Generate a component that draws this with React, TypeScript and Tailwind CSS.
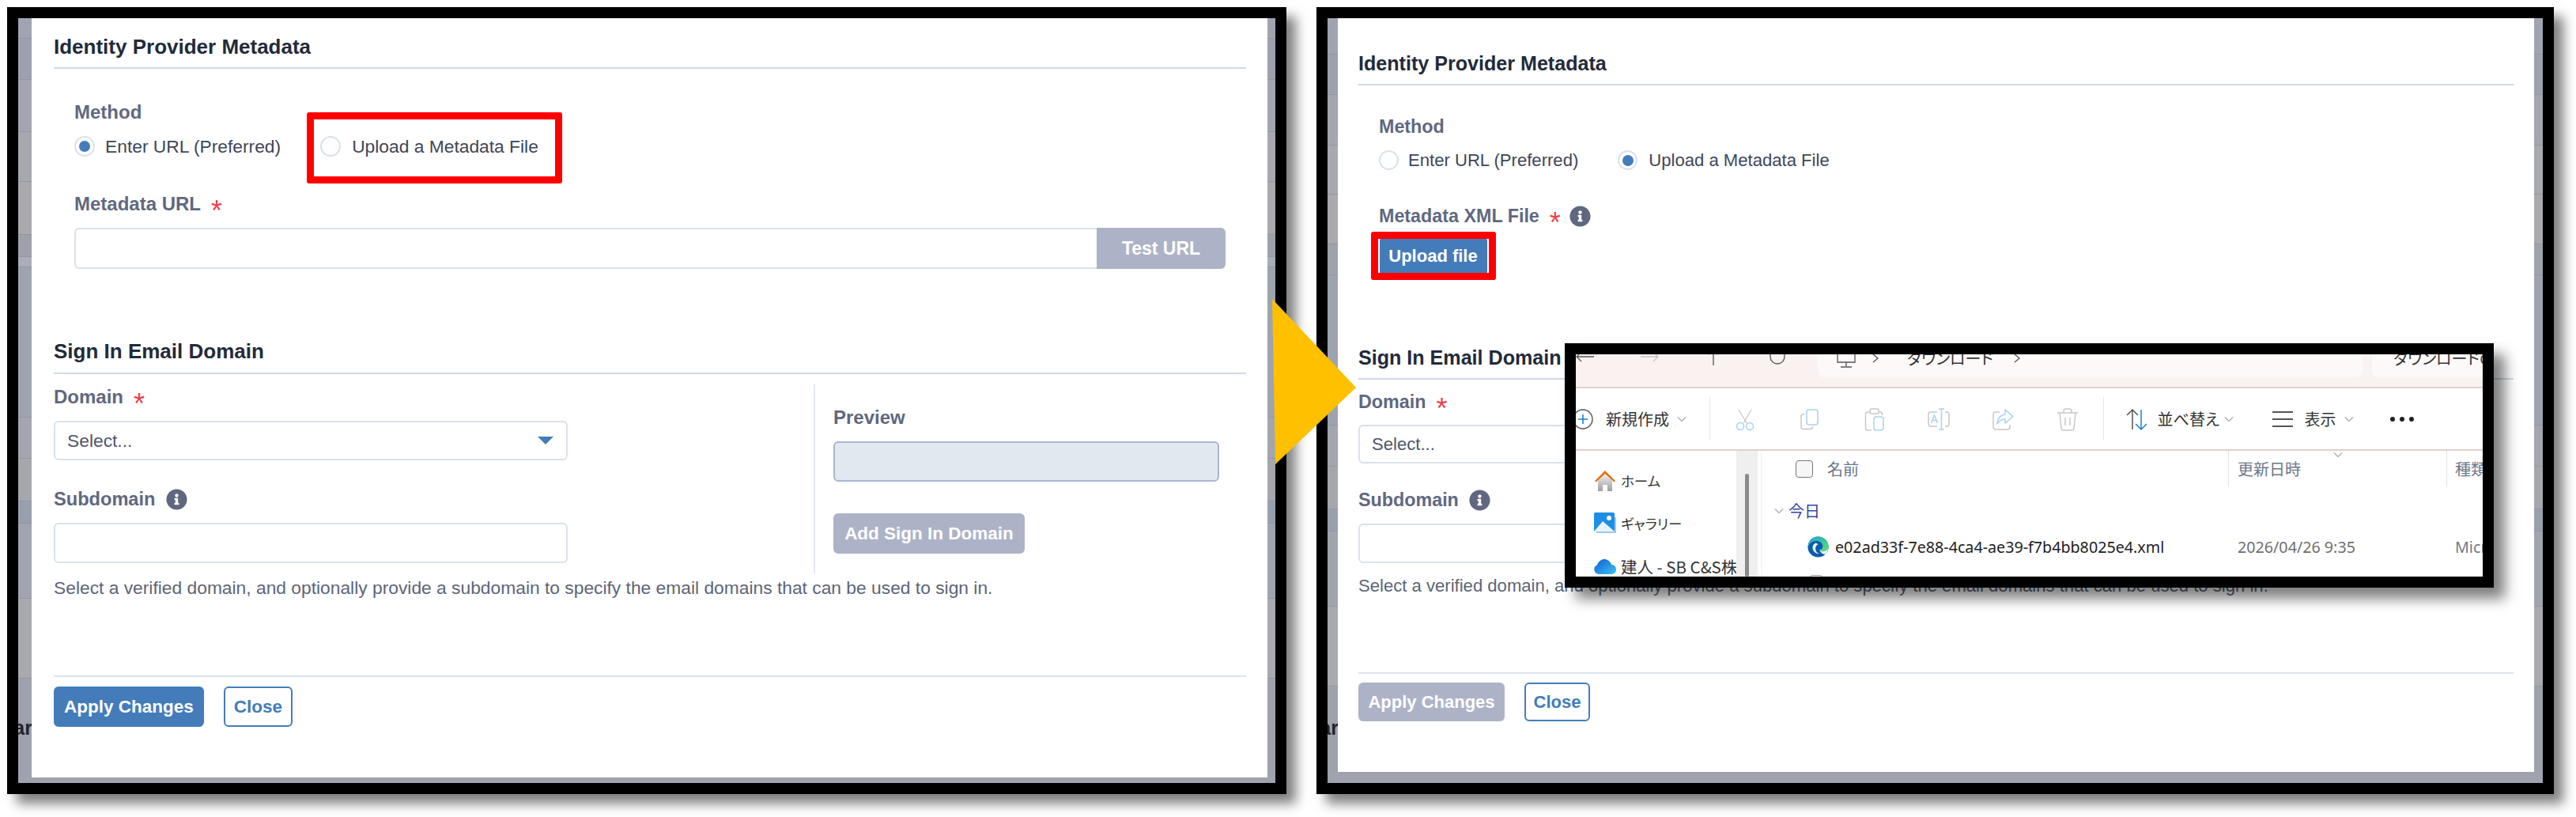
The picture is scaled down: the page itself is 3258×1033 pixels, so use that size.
import { FaInfoCircle } from 'react-icons/fa'

const sans = "font-['Liberation_Sans',Arial,sans-serif]"
const jp = "font-['Noto_Sans_CJK_JP','Noto_Sans',sans-serif]"

// slivers of the page behind the dialog: height and colour of each band
const bandsLeft = [
  [26, '#a0a4b2'], [52, '#9da1af'], [66, '#a3a6b0'], [63, '#a8a9b0'], [67, '#a9a9ae'],
  [28, '#9ea1aa'], [13, '#a9aeb8'], [190, '#9ea3b0'], [52, '#a3a6ae'], [54, '#a6a7ad'],
  [28, '#98a0ae'], [95, '#a0a4ae'], [101, '#a9a9b0'], [132, '#9ea2ac'],
] as const
const bandsRight = [
  [46, '#a0a4b2'], [51, '#9da1af'], [64, '#a3a6b0'], [62, '#a8a9b0'], [63, '#a9a9ae'],
  [39, '#9ea3ae'], [190, '#9ea3b0'], [52, '#a3a6ae'], [54, '#a6a7ad'], [28, '#98a0ae'],
  [95, '#a0a4ae'], [101, '#a9a9b0'], [121, '#9ea2ac'],
] as const

function Strip({ bands, width, fragment }: { bands: readonly (readonly [number, string])[]; width: string; fragment?: string }) {
  return (
    <div className={`relative flex shrink-0 flex-col overflow-hidden ${width}`}>
      {bands.map(([h, c], i) => (
        <div key={i} className="shrink-0 border-b border-[#92969f]" style={{ height: h, backgroundColor: c }} />
      ))}
      {fragment && <span className={`absolute right-[-1px] top-[882px] text-[25px] font-bold leading-[30px] text-[#20242e] ${sans}`}>{fragment}</span>}
    </div>
  )
}

function Radio({ on, size }: { on?: boolean; size: string }) {
  return (
    <span className={`flex shrink-0 items-center justify-center rounded-full border-2 border-[#d9e1ec] bg-white ${size}`}>
      {on && <span className="h-[14px] w-[14px] rounded-full bg-[#447cba]" />}
    </span>
  )
}

function Star() {
  return <span className="ml-[13px] mt-[18px] text-[36px] font-normal leading-[30px] text-[#ee3f4e]">*</span>
}

function CutIcon() {
  return (
    <svg viewBox="0 0 30 30" className="h-[30px] w-[30px]" fill="none">
      <path d="M7 3l10 17M23 3L13 20" stroke="#c8c8c8" strokeWidth="1.3" />
      <circle cx="9" cy="24" r="4.5" stroke="#a6d2f2" strokeWidth="1.5" />
      <circle cx="21" cy="24" r="4.5" stroke="#a6d2f2" strokeWidth="1.5" />
    </svg>
  )
}
function CopyIcon() {
  return (
    <svg viewBox="0 0 30 30" className="h-[30px] w-[30px]" fill="none">
      <path d="M8 9H6.500A2.500 2.500 0 0 0 4 11.500V25a2.500 2.500 0 0 0 2.500 2.500H16A2.500 2.500 0 0 0 18.500 25v-1" stroke="#c8c8c8" strokeWidth="1.5" />
      <rect x="11" y="3" width="14" height="19" rx="3" stroke="#a6d2f2" strokeWidth="1.5" />
    </svg>
  )
}
function PasteIcon() {
  return (
    <svg viewBox="0 0 30 30" className="h-[30px] w-[30px]" fill="none">
      <path d="M10 6H7a2.500 2.500 0 0 0-2.500 2.500v18A2.500 2.500 0 0 0 7 29h5M21 6h2a2.500 2.500 0 0 1 2.500 2.500V10" stroke="#c8c8c8" strokeWidth="1.5" />
      <rect x="10" y="2" width="11" height="6" rx="2" stroke="#c8c8c8" strokeWidth="1.5" />
      <rect x="15" y="12" width="12" height="17" rx="3" stroke="#a6d2f2" strokeWidth="1.5" />
    </svg>
  )
}
function RenameIcon() {
  return (
    <svg viewBox="0 0 30 30" className="h-[30px] w-[30px]" fill="none">
      <path d="M13 6H5a3 3 0 0 0-3 3v12a3 3 0 0 0 3 3h8M23 6h2a3 3 0 0 1 3 3v12a3 3 0 0 1-3 3h-2" stroke="#c8c8c8" strokeWidth="1.5" />
      <path d="M15 2h7M15 28h7M18.500 2v26M5.500 20l4-10 4 10M7 16.500h5" stroke="#a6d2f2" strokeWidth="1.5" />
    </svg>
  )
}
function ShareIcon() {
  return (
    <svg viewBox="0 0 30 30" className="h-[30px] w-[30px]" fill="none">
      <path d="M11 6H6a3 3 0 0 0-3 3v16a3 3 0 0 0 3 3h15a3 3 0 0 0 3-3v-3" stroke="#c8c8c8" strokeWidth="1.5" />
      <path d="M18 3l10 8.500-10 8.500v-5c-5 0-8 2-10 6 0-7 4-11 10-12z" stroke="#a6d2f2" strokeWidth="1.5" strokeLinejoin="round" />
    </svg>
  )
}
function TrashIcon() {
  return (
    <svg viewBox="0 0 30 30" className="h-[30px] w-[30px]" fill="none" stroke="#c8c8c8" strokeWidth="1.5">
      <path d="M2 7h26M10 7V4.500A2.500 2.500 0 0 1 12.500 2h5A2.500 2.500 0 0 1 20 4.500V7M5 7l2 20a2.500 2.500 0 0 0 2.500 2h11a2.500 2.500 0 0 0 2.500-2l2-20M12 13v10M18 13v10" />
    </svg>
  )
}
function Chevron({ className }: { className?: string }) {
  return (
    <svg viewBox="0 0 12 8" className={`h-[8px] w-[12px] shrink-0 ${className ?? ''}`} fill="none" stroke="#666" strokeWidth="1">
      <path d="M1 1.500l5 5 5-5" />
    </svg>
  )
}
function HomeIcon() {
  return (
    <svg viewBox="0 0 28 28" className="h-[28px] w-[28px] shrink-0">
      <defs>
        <linearGradient id="wall" x1="0" y1="0" x2="0" y2="1">
          <stop offset="0" stopColor="#f2f2f2" />
          <stop offset="1" stopColor="#9c9c9c" />
        </linearGradient>
      </defs>
      <path d="M5 13L14 5l9 8v14h-6v-8h-6v8H5z" fill="url(#wall)" />
      <path d="M14 1L1 14l1.500 1.500L14 5l11.500 10.500L27 14z" fill="#e3700f" />
    </svg>
  )
}
function GalleryIcon() {
  return (
    <svg viewBox="0 0 28 28" className="h-[28px] w-[28px] shrink-0">
      <path d="M3 3v23h25V6" fill="#9cc9ee" />
      <rect x="0" y="0" width="26" height="24" rx="1.500" fill="#1d8fe6" />
      <path d="M0 24l11-13 15 13z" fill="#e8f3fc" />
      <circle cx="19" cy="7" r="3" fill="#fff" />
    </svg>
  )
}
function CloudIcon() {
  return (
    <svg viewBox="0 0 28 20" className="h-[20px] w-[28px] shrink-0">
      <defs>
        <linearGradient id="cl" x1="0" y1="0" x2="1" y2="1">
          <stop offset="0" stopColor="#0c5fd0" />
          <stop offset="1" stopColor="#3fc0f5" />
        </linearGradient>
      </defs>
      <path d="M6 20a6 6 0 0 1-2-11.500C6 3 10 1 13 1c4 0 8 3 9 7 3.500 0 6 2.500 6 6s-2.500 6-6 6z" fill="url(#cl)" />
    </svg>
  )
}
function EdgeIcon() {
  return (
    <svg viewBox="0 0 32 32" className="h-[27px] w-[27px] shrink-0">
      <defs>
        <linearGradient id="eg" x1="0" y1="0" x2="1" y2="1">
          <stop offset="0" stopColor="#1fa2d8" />
          <stop offset="1" stopColor="#5ee06e" />
        </linearGradient>
      </defs>
      <circle cx="16" cy="16" r="15.500" fill="#0b5cab" />
      <path d="M16 .5A15.500 15.500 0 0 1 31.500 17c0 3.500-3 5.500-7 5.500-3 0-6-1-6.500-2.500 3 0 5-2 5-5 0-5-5-8-10-8-6 0-10 4-12.500 9C1 8 7.500.5 16 .5z" fill="url(#eg)" />
      <path d="M18 20c2 2.500 5 3 7 2.500 2.500-.5 5-2 6-3.500-.5 3-2 6-4 8-3 0-7-1-9-7z" fill="#f2fbff" />
      <path d="M13 10c-4 1-6 5-5 9 1 5 6 8 11 7-4 0-7-3-7-7 0-3 1-6 4-7z" fill="#e8f6fc" />
    </svg>
  )
}

function FileExplorer() {
  return (
    <div className="absolute left-[314px] top-[425px] z-10 h-[309px] w-[1175px] border-[14px] border-black bg-white shadow-[14px_14px_16px_rgba(0,0,0,0.5)]">
      <div className={`flex h-full flex-col overflow-hidden text-[#333] [font-feature-settings:'palt'] ${jp}`}>
        {/* address bar, cut off at the top */}
        <div className="flex h-[43px] shrink-0 items-start overflow-hidden border-b-2 border-[#e2cfcf] bg-[#f9f2f1]">
          <div className="flex shrink-0 gap-[57px] text-[#555]">
            <svg viewBox="0 0 24 12" className="h-[12px] w-[24px]" fill="none" stroke="#555" strokeWidth="1.300"><path d="M1 3h22M7 -3L1 3l6 6" /></svg>
            <svg viewBox="0 0 24 12" className="h-[12px] w-[24px]" fill="none" stroke="#c4c4c4" strokeWidth="1.300"><path d="M1 3h22M17 -3l6 6-6 6" /></svg>
            <svg viewBox="0 0 24 14" className="h-[14px] w-[24px]" fill="none" stroke="#555" strokeWidth="1.300"><path d="M12 0v14M6 0l6-3 6 3" /></svg>
            <svg viewBox="0 0 24 14" className="h-[14px] w-[24px]" fill="none" stroke="#555" strokeWidth="1.300"><path d="M3 0v3a9 9 0 0 0 18 0V0" /></svg>
          </div>
          <div className="ml-[39px] flex h-[29px] w-[689px] shrink-0 items-start rounded-b-lg bg-[#fdf9f9] pl-[23px]">
            <svg viewBox="0 0 26 18" className="h-[18px] w-[26px] shrink-0" fill="none" stroke="#555" strokeWidth="1.300"><path d="M2 -4h22v14H2zM13 10v5M6 16h14" /></svg>
            <svg viewBox="0 0 10 14" className="ml-[19px] h-[14px] w-[10px] shrink-0" fill="none" stroke="#555" strokeWidth="1.300"><path d="M2 0l6 5-6 5" /></svg>
            <span className="ml-[35px] mt-[-9px] h-[28px] w-[100px] shrink-0 whitespace-nowrap text-[20px] leading-[28px]">ダウンロード</span>
            <svg viewBox="0 0 10 14" className="ml-[34px] h-[14px] w-[10px] shrink-0" fill="none" stroke="#555" strokeWidth="1.300"><path d="M2 0l6 5-6 5" /></svg>
          </div>
          <div className="ml-[12px] h-[29px] flex-1 overflow-hidden rounded-bl-lg bg-[#fdf9f9] pl-[27px]">
            <span className="mt-[-9px] block h-[28px] whitespace-nowrap text-[20px] leading-[28px]">ダウンロードの検索</span>
          </div>
        </div>

        {/* command bar */}
        <div className="flex h-[79px] shrink-0 items-center overflow-hidden border-b-2 border-[#e2cfcf] bg-white">
          <svg viewBox="0 0 26 26" className="-ml-[4px] h-[26px] w-[26px] shrink-0" fill="none">
            <circle cx="13" cy="13" r="12" stroke="#555" strokeWidth="1.400" />
            <path d="M13 7v12M7 13h12" stroke="#1a7fd6" strokeWidth="1.600" />
          </svg>
          <span className="ml-[16px] w-[80px] shrink-0 whitespace-nowrap text-[20px] leading-[26px]">新規作成</span>
          <Chevron className="ml-[10px]" />
          <div className="ml-[29px] h-[55px] w-px shrink-0 bg-[#e8e8e8]" />
          <div className="ml-[29px] flex shrink-0 gap-[51.500px]">
            <CutIcon />
            <CopyIcon />
            <PasteIcon />
            <RenameIcon />
            <ShareIcon />
            <TrashIcon />
          </div>
          <div className="ml-[30px] h-[55px] w-px shrink-0 bg-[#e8e8e8]" />
          <svg viewBox="0 0 30 30" className="ml-[26px] h-[30px] w-[30px] shrink-0" fill="none" strokeWidth="1.500">
            <path d="M10 28V3M3 10l7-7 7 7" stroke="#555" />
            <path d="M21 3v25M14 21l7 7 7-7" stroke="#1a7fd6" />
          </svg>
          <span className="ml-[12px] w-[74px] shrink-0 whitespace-nowrap text-[20px] leading-[26px]">並べ替え</span>
          <Chevron className="ml-[10px]" />
          <svg viewBox="0 0 30 24" className="ml-[47px] h-[24px] w-[30px] shrink-0" fill="none" stroke="#555" strokeWidth="1.800">
            <path d="M2 3h26M2 12h26M2 21h26" />
          </svg>
          <span className="ml-[13px] w-[40px] shrink-0 whitespace-nowrap text-[20px] leading-[26px]">表示</span>
          <Chevron className="ml-[10px]" />
          <div className="ml-[46px] flex shrink-0 gap-[6px]">
            <span className="h-[6px] w-[6px] rounded-full bg-[#222]" />
            <span className="h-[6px] w-[6px] rounded-full bg-[#222]" />
            <span className="h-[6px] w-[6px] rounded-full bg-[#222]" />
          </div>
        </div>

        <div className="flex min-h-0 flex-1 overflow-hidden">
          {/* navigation pane */}
          <div className="w-[203px] shrink-0 overflow-hidden pl-[23px] pt-[11px]">
            <div className="flex h-[54px] items-center gap-[6px] whitespace-nowrap text-[17.500px]"><HomeIcon />ホーム</div>
            <div className="flex h-[54px] items-center gap-[6px] whitespace-nowrap text-[17.500px]"><GalleryIcon />ギャラリー</div>
            <div className="flex h-[54px] items-center gap-[6px] whitespace-nowrap text-[20.500px]"><CloudIcon />建人 - SB C&amp;S株式会社</div>
          </div>
          <div className="flex w-[27px] shrink-0 justify-center bg-[#efefef] pt-[29px]">
            <div className="h-full w-[5px] rounded-full bg-[#8a8a8a]" />
          </div>
          <div className="ml-[4px] min-w-0 flex-1 overflow-hidden border-l border-[#f0f0f0]">
            <div className="relative grid h-[46px] grid-cols-[590px_276px_1fr] items-center text-[20px] text-[#6b7888]">
              <div className="flex items-center pl-[43px]">
                <span className="h-[22px] w-[22px] rounded-[4px] border border-[#777] bg-[#f6f6f6]" />
                <span className="ml-[18px]">名前</span>
              </div>
              <div className="flex h-full items-center border-l border-[#e2e2e2] pl-[11px] leading-[26px]">更新日時</div>
              <div className="flex h-full items-center overflow-hidden whitespace-nowrap border-l border-[#e2e2e2] pl-[10px]">種類</div>
              <Chevron className="absolute left-[723px] top-[1px]" />
            </div>
            <div className="mt-[12px] flex h-[36px] items-center pl-[16px]">
              <Chevron />
              <span className="ml-[6px] text-[20px] text-[#34499c]">今日</span>
            </div>
            <div className="mt-[10px] grid h-[36px] grid-cols-[590px_276px_1fr] items-center whitespace-nowrap font-['Noto_Sans',sans-serif] text-[19.700px]">
              <div className="flex items-center pl-[58px] text-[#222]">
                <EdgeIcon />
                <span className="ml-[8px]">e02ad33f-7e88-4ca4-ae39-f7b4bb8025e4.xml</span>
              </div>
              <div className="pl-[12px] text-[#6f6f6f]">2026/04/26 9:35</div>
              <div className="overflow-hidden pl-[11px] text-[#6f7a88]">Microsoft Edge</div>
            </div>
            <div className="ml-[61px] mt-[17px] h-[16px] w-[16px] rounded-t-[3px] border border-[#999]" />
          </div>
        </div>
      </div>
    </div>
  )
}

export default function App() {
  return (
    <div className={`relative flex h-[1033px] w-[3258px] gap-[38px] overflow-hidden bg-white pl-[9px] pt-[9px] ${sans}`}>
      {/* Before: enter URL selected */}
      <div className="flex h-[995px] w-[1618px] shrink-0 flex-col overflow-hidden border-[14px] border-black shadow-[12px_12px_14px_rgba(0,0,0,0.5)]">
        <div className="flex min-h-0 flex-1">
          <Strip bands={bandsLeft} width="w-[17px]" fragment="ar" />
          <div className="flex h-[960px] flex-1 flex-col rounded-br-[6px] bg-white px-[28px] pr-[27px]">
            <div className="flex h-[64px] shrink-0 items-center border-b-2 border-[#cfd9e7] pt-[11px] text-[26px] font-bold text-[#222a3a]">Identity Provider Metadata</div>
            <div className="pl-[26px] pr-[26px]">
              <div className="mt-[40px] text-[24px] font-bold leading-[30px] text-[#5f6880]">Method</div>
              <div className="mt-[15px] flex h-[26px] items-center text-[22.800px] text-[#3f4658]">
                <Radio on size="h-[26px] w-[26px]" />
                <span className="ml-[13px] whitespace-nowrap">Enter URL (Preferred)</span>
                <span className="relative ml-[50px] flex items-center">
                  <Radio size="h-[26px] w-[26px]" />
                  <span className="ml-[14px] whitespace-nowrap">Upload a Metadata File</span>
                  <span className="absolute -bottom-[30px] -left-[17px] -right-[30px] -top-[26px] rounded-[3px] border-[9px] border-[#ff0000]" />
                </span>
              </div>
              <div className="mt-[45px] flex h-[30px] items-center text-[24px] font-bold leading-[30px] text-[#5f6880]">Metadata URL<Star /></div>
              <div className="mt-[15px] flex h-[52px]">
                <div className="flex-1 rounded-l-[6px] border-2 border-r-0 border-[#d9e1ec] bg-white" />
                <div className="flex w-[163px] items-center justify-center rounded-r-[6px] bg-[#adb3c7] text-[23px] font-bold text-white">Test URL</div>
              </div>
            </div>
            <div className="mt-[69px] flex h-[64px] shrink-0 items-center border-b-2 border-[#cfd9e7] pt-[9px] text-[26px] font-bold text-[#222a3a]">Sign In Email Domain</div>
            <div className="mt-[13px] flex h-[239px]">
              <div className="w-[961px] shrink-0 pt-[1px]">
                <div className="flex h-[30px] items-center text-[24px] font-bold leading-[30px] text-[#5f6880]">Domain<Star /></div>
                <div className="mt-[15px] flex h-[50px] w-[650px] items-center justify-between rounded-[6px] border-2 border-[#d9e1ec] pl-[15px] pr-[16px] text-[22.800px] text-[#4f566a]">
                  Select...
                  <svg viewBox="0 0 20 10" className="h-[10px] w-[20px]"><path d="M0 0h20L10 10z" fill="#447cba" /></svg>
                </div>
                <div className="mt-[34px] flex h-[30px] items-center text-[23.600px] font-bold leading-[30px] text-[#5f6880]">
                  Subdomain
                  <FaInfoCircle className="ml-[14px] h-[27px] w-[27px] text-[#5f6880]" />
                </div>
                <div className="mt-[15px] h-[51px] w-[650px] rounded-[6px] border-2 border-[#d9e1ec]" />
              </div>
              <div className="flex-1 border-l-2 border-[#e2e8f0] pl-[23px] pt-[27px]">
                <div className="h-[30px] text-[24px] font-bold leading-[30px] text-[#5f6880]">Preview</div>
                <div className="mt-[15px] h-[51px] w-[488px] rounded-[6px] border-2 border-[#a9b6cf] bg-[#e1e8f0]" />
                <div className="mt-[40px] flex h-[51px] w-[242px] items-center justify-center rounded-[6px] bg-[#adb3c7] text-[22.500px] font-bold text-white">Add Sign In Domain</div>
              </div>
            </div>
            <div className="mt-[3px] h-[30px] whitespace-nowrap text-[22.800px] leading-[30px] text-[#5d6578]">Select a verified domain, and optionally provide a subdomain to specify the email domains that can be used to sign in.</div>
            <div className="mt-[96px] border-t-2 border-[#dde4ee] pt-[12px]">
              <div className="flex gap-[25px]">
                <div className="flex h-[51px] w-[190px] items-center justify-center rounded-[6px] bg-[#447cba] text-[22.500px] font-bold text-white">Apply Changes</div>
                <div className="flex h-[51px] w-[87px] items-center justify-center rounded-[6px] border-2 border-[#447cba] text-[22.500px] font-bold text-[#447cba]">Close</div>
              </div>
            </div>
          </div>
          <Strip bands={bandsLeft} width="w-[10px]" />
        </div>
        <div className="h-[7px] shrink-0 bg-[#9fa3ad]" />
      </div>

      {/* After: metadata file selected */}
      <div className="flex h-[995px] w-[1565px] shrink-0 flex-col overflow-hidden border-[14px] border-black shadow-[12px_12px_14px_rgba(0,0,0,0.5)]">
        <div className="flex min-h-0 flex-1">
          <Strip bands={bandsRight} width="w-[13px]" fragment="ar" />
          <div className="flex h-[952px] flex-1 flex-col rounded-b-[6px] bg-white pl-[26px] pr-[26px]">
            <div className="flex h-[85px] shrink-0 items-center border-b-2 border-[#cfd9e7] pt-[32px] text-[25.100px] font-bold text-[#222a3a]">Identity Provider Metadata</div>
            <div className="pl-[26px]">
              <div className="mt-[37px] text-[23.300px] font-bold leading-[30px] text-[#5f6880]">Method</div>
              <div className="mt-[15px] flex h-[25px] items-center text-[22.100px] text-[#3f4658]">
                <Radio size="h-[25px] w-[25px]" />
                <span className="ml-[12px] whitespace-nowrap">Enter URL (Preferred)</span>
                <span className="ml-[50px] flex items-center">
                  <Radio on size="h-[25px] w-[25px]" />
                  <span className="ml-[14px] whitespace-nowrap">Upload a Metadata File</span>
                </span>
              </div>
              <div className="mt-[43px] flex h-[30px] items-center text-[23.300px] font-bold leading-[30px] text-[#5f6880]">
                Metadata XML File<Star />
                <FaInfoCircle className="ml-[11px] h-[27px] w-[27px] text-[#5f6880]" />
              </div>
              <div className="relative -ml-[1.500px] mt-[14px] flex h-[43px] w-[140px] items-center justify-center rounded-t-[3px] border-x-2 border-white bg-[#447cba] text-[22px] font-bold text-white">
                Upload file
                <span className="absolute -bottom-[9px] -left-[11px] -right-[11px] -top-[9px] rounded-[3px] border-[9px] border-[#ff0000]" />
              </div>
            </div>
            <div className="mt-[72px] flex h-[63px] shrink-0 items-center border-b-2 border-[#cfd9e7] pt-[10px] text-[25.100px] font-bold text-[#222a3a]">Sign In Email Domain</div>
            <div className="mt-[13px] h-[219px]">
              <div className="flex h-[30px] items-center text-[23.300px] font-bold leading-[30px] text-[#5f6880]">Domain<Star /></div>
              <div className="mt-[14px] flex h-[49px] w-[625px] items-center rounded-[6px] border-2 border-[#d9e1ec] pl-[15px] text-[22.100px] text-[#4f566a]">Select...</div>
              <div className="mt-[31px] flex h-[30px] items-center text-[23.300px] font-bold leading-[30px] text-[#5f6880]">
                Subdomain
                <FaInfoCircle className="ml-[13px] h-[27px] w-[27px] text-[#5f6880]" />
              </div>
              <div className="mt-[15px] h-[50px] w-[625px] rounded-[6px] border-2 border-[#d9e1ec]" />
            </div>
            <div className="mt-[14px] h-[30px] whitespace-nowrap text-[22.100px] leading-[30px] text-[#5d6578]">Select a verified domain, and optionally provide a subdomain to specify the email domains that can be used to sign in.</div>
            <div className="mt-[94px] border-t-2 border-[#dde4ee] pt-[11px]">
              <div className="flex gap-[25px]">
                <div className="flex h-[49px] w-[185px] items-center justify-center rounded-[6px] bg-[#adb3c7] text-[22px] font-bold text-white">Apply Changes</div>
                <div className="flex h-[49px] w-[83px] items-center justify-center rounded-[6px] border-2 border-[#447cba] text-[22px] font-bold text-[#447cba]">Close</div>
              </div>
            </div>
          </div>
          <Strip bands={bandsRight} width="w-[11px]" />
        </div>
        <div className="h-[14px] shrink-0 bg-[#9fa3ad]" />
      </div>

      {/* arrow and the file dialog lie over the panels */}
      <div className="absolute left-[1665px] top-[9px] h-0 w-0">
        <FileExplorer />
      </div>
      <svg viewBox="0 0 107 210" className="absolute left-[1609px] top-[378px] h-[210px] w-[107px]">
        <polygon points="0,0 106,112 4,209" fill="#ffc000" />
      </svg>
    </div>
  )
}
